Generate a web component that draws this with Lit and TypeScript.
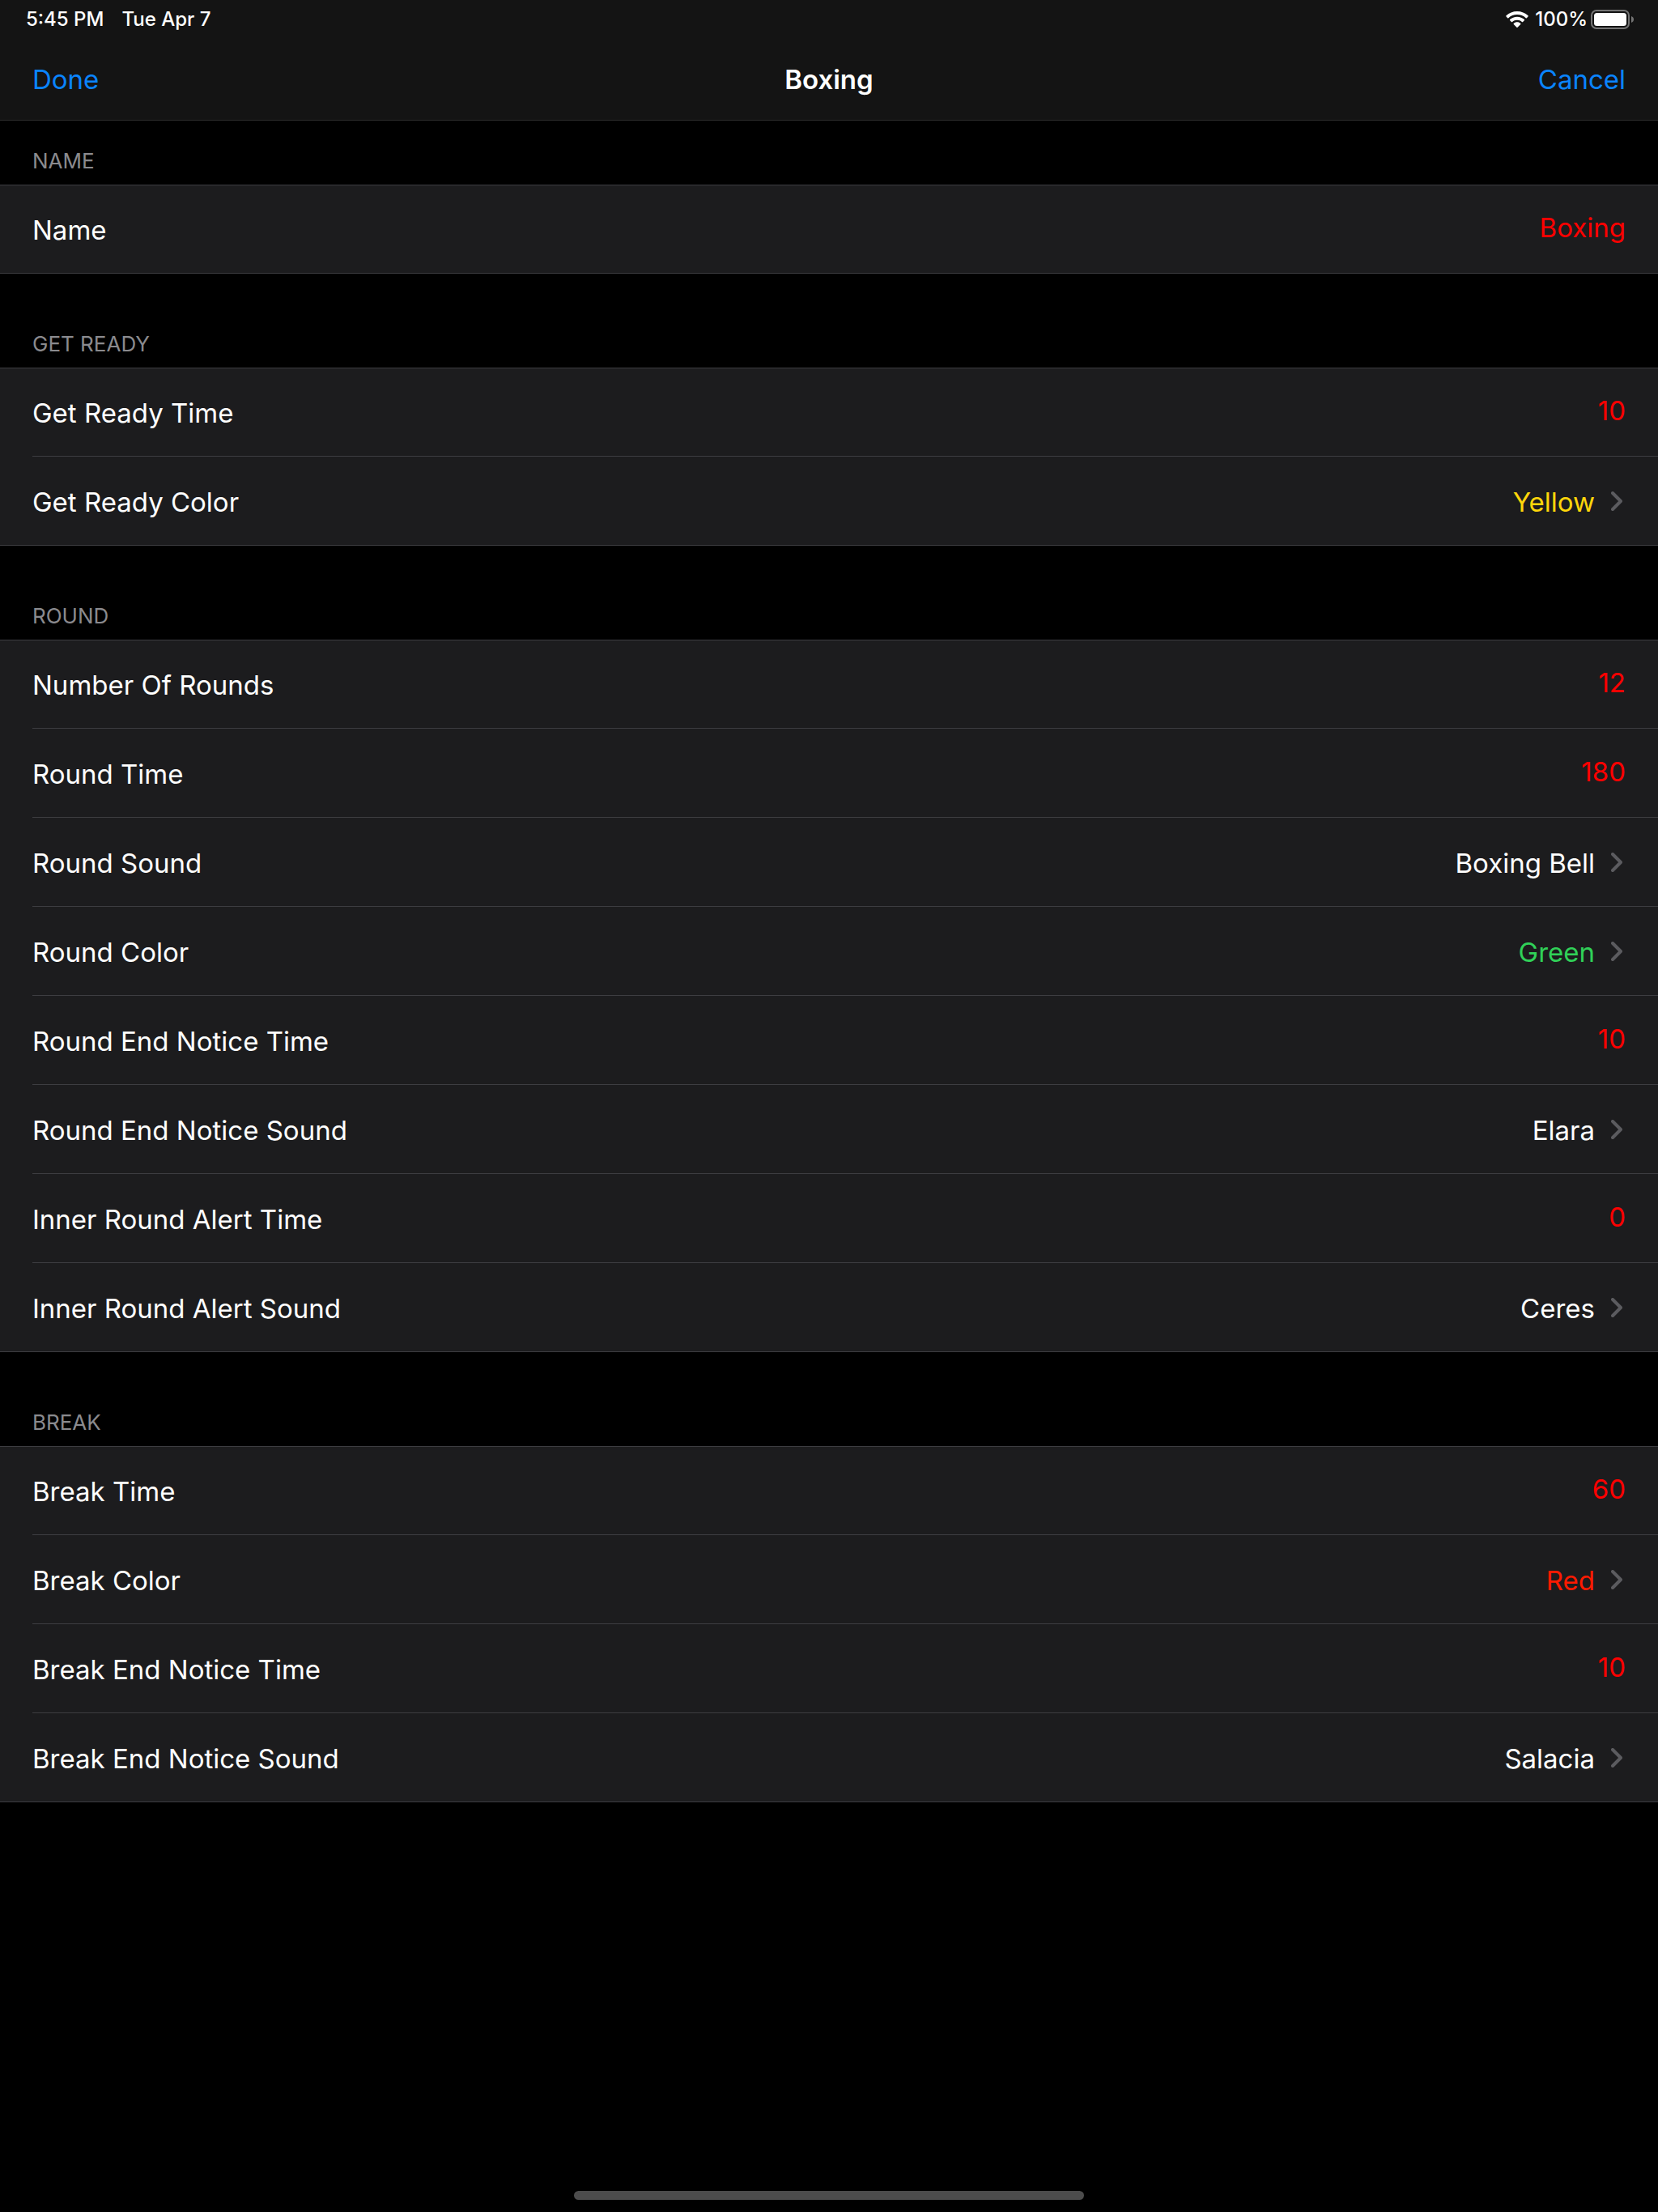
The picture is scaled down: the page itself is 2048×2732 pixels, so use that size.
import { LitElement, html, css, nothing } from "lit";
import { customElement, property } from "lit/decorators.js";
import { classMap } from "lit/directives/class-map.js";

type Tone = "plain" | "yellow" | "green" | "red";

interface Setting {
  id: string;
  label: string;
  value: string;
  kind: "text" | "number" | "choice";
  tone?: Tone;
}

interface Group {
  title: string;
  settings: Setting[];
}

const GROUPS: Group[] = [
  {
    title: "Name",
    settings: [{ id: "name", label: "Name", value: "Boxing", kind: "text" }],
  },
  {
    title: "Get Ready",
    settings: [
      { id: "ready-time", label: "Get Ready Time", value: "10", kind: "number" },
      { id: "ready-color", label: "Get Ready Color", value: "Yellow", kind: "choice", tone: "yellow" },
    ],
  },
  {
    title: "Round",
    settings: [
      { id: "rounds", label: "Number Of Rounds", value: "12", kind: "number" },
      { id: "round-time", label: "Round Time", value: "180", kind: "number" },
      { id: "round-sound", label: "Round Sound", value: "Boxing Bell", kind: "choice" },
      { id: "round-color", label: "Round Color", value: "Green", kind: "choice", tone: "green" },
      { id: "round-end-time", label: "Round End Notice Time", value: "10", kind: "number" },
      { id: "round-end-sound", label: "Round End Notice Sound", value: "Elara", kind: "choice" },
      { id: "inner-time", label: "Inner Round Alert Time", value: "0", kind: "number" },
      { id: "inner-sound", label: "Inner Round Alert Sound", value: "Ceres", kind: "choice" },
    ],
  },
  {
    title: "Break",
    settings: [
      { id: "break-time", label: "Break Time", value: "60", kind: "number" },
      { id: "break-color", label: "Break Color", value: "Red", kind: "choice", tone: "red" },
      { id: "break-end-time", label: "Break End Notice Time", value: "10", kind: "number" },
      { id: "break-end-sound", label: "Break End Notice Sound", value: "Salacia", kind: "choice" },
    ],
  },
];

@customElement("status-bar")
export class StatusBar extends LitElement {
  static styles = css`
    :host {
      display: flex;
      align-items: center;
      justify-content: space-between;
      height: 48px;
      padding: 0 29px 0 32px;
      box-sizing: border-box;
      font-size: 24px;
      line-height: 28px;
      font-weight: 500;
      color: #fff;
    }
    .side {
      display: flex;
      align-items: center;
    }
    .clock {
      gap: 22px;
    }
    .wifi {
      margin-right: 8px;
    }
    .battery {
      margin-left: 4px;
    }
    svg {
      display: block;
    }
  `;

  render() {
    return html`
      <div class="side clock"><span>5:45 PM</span><span>Tue Apr 7</span></div>
      <div class="side">
        <svg class="wifi" width="28" height="20" viewBox="0 0 28 20" fill="#fff" aria-hidden="true">
          <path d="M14 0C8.800 0 4 2 .5 5.300c-.35.350-.35.800 0 1.150l1.700 1.700c.3.300.75.300 1.100 0C6.200 5.500 9.900 4.100 14 4.100s7.800 1.400 10.700 4.050c.35.300.8.300 1.100 0l1.700-1.700c.35-.35.350-.8 0-1.150C24 2 19.200 0 14 0z"/>
          <path d="M14 6.700c-3.400 0-6.500 1.250-8.850 3.400-.35.350-.35.800 0 1.150l1.800 1.700c.3.300.75.300 1.100 0C9.650 11.500 11.700 10.700 14 10.700s4.350.8 5.950 2.250c.35.300.8.300 1.100 0l1.800-1.700c.35-.35.350-.8 0-1.150C20.500 7.950 17.400 6.700 14 6.700z"/>
          <path d="M14 13.300c-1.650 0-3.100.6-4.250 1.600-.35.350-.35.800 0 1.150l3.700 3.650c.3.300.8.300 1.100 0l3.700-3.650c.35-.35.350-.8 0-1.150-1.150-1-2.600-1.600-4.250-1.600z"/>
        </svg>
        <span>100%</span>
        <svg class="battery" width="54" height="24" viewBox="0 0 54 24" aria-hidden="true">
          <rect x="1" y="1" width="46" height="22" rx="6" fill="none" stroke="#747474" stroke-width="2"/>
          <rect x="4" y="4" width="40" height="16" rx="3.500" fill="#fff"/>
          <path d="M50 8c2 .7 3 2.200 3 4s-1 3.300-3 4z" fill="#747474"/>
        </svg>
      </div>
    `;
  }
}

@customElement("setting-row")
export class SettingRow extends LitElement {
  @property({ attribute: false }) setting!: Setting;

  static styles = css`
    :host {
      display: block;
    }
    .row {
      display: flex;
      align-items: center;
      justify-content: space-between;
      box-sizing: border-box;
      width: 100%;
      height: 110px;
      margin: 0;
      padding: 2px 40px 0;
      border: 0;
      background: none;
      font: inherit;
      color: #fff;
      text-align: left;
    }
    .label {
      flex: none;
    }
    .field {
      flex: 1;
      min-width: 0;
      height: 40px;
      box-sizing: content-box;
      margin: 0;
      padding: 0 0 6px;
      border: 0;
      outline: 0;
      background: none;
      font: inherit;
      text-align: right;
      color: #f00;
    }
    .value {
      display: flex;
      align-items: center;
      gap: 20px;
    }
    .chevron {
      display: block;
      margin-right: 4px;
    }
    .yellow {
      color: #ffd60a;
    }
    .green {
      color: #30d158;
    }
    .red {
      color: #ff1a00;
    }
  `;

  render() {
    const s = this.setting;
    if (s.kind !== "choice") {
      return html`
        <div class="row">
          <label class="label" for=${s.id}>${s.label}</label>
          <input
            class="field"
            id=${s.id}
            type="text"
            inputmode=${s.kind === "number" ? "numeric" : nothing}
            .value=${s.value}
          />
        </div>
      `;
    }
    const tone = s.tone ?? "plain";
    return html`
      <button class="row" type="button">
        <span class="label">${s.label}</span>
        <span class="value">
          <span class=${classMap({ [tone]: true })}>${s.value}</span>
          <svg class="chevron" width="14" height="26" viewBox="0 0 14 26" fill="none" stroke="#5b5b5f"
            stroke-width="4" stroke-linecap="round" stroke-linejoin="round" aria-hidden="true">
            <path d="M2 2L12 12L2 22"/>
          </svg>
        </span>
      </button>
    `;
  }
}

@customElement("app-root")
export class AppRoot extends LitElement {
  static styles = css`
    :host {
      display: flex;
      flex-direction: column;
      min-height: 100vh;
      background: #000;
      color: #fff;
      font-family: Inter, "Liberation Sans", sans-serif;
      font-size: 33px;
      line-height: 40px;
    }
    .top {
      background: #141414;
      border-bottom: 1px solid #2b2b2b;
    }
    .nav {
      display: grid;
      grid-template-columns: 1fr auto 1fr;
      align-items: center;
      height: 100px;
      padding: 0 40px;
    }
    .title {
      margin: 0;
      font-size: 33px;
      font-weight: 600;
    }
    .action {
      justify-self: start;
      margin: 0;
      padding: 0;
      border: 0;
      background: none;
      font: inherit;
      color: #0a84ff;
    }
    .cancel {
      justify-self: end;
    }
    .group-title {
      display: flex;
      align-items: flex-end;
      box-sizing: border-box;
      height: 116px;
      margin: 0;
      padding: 0 40px 13px;
      font-size: 26px;
      line-height: 32px;
      font-weight: 400;
      text-transform: uppercase;
      color: #8a8a8e;
    }
    .group:first-child .group-title {
      height: 79px;
    }
    .rows {
      list-style: none;
      margin: 0;
      padding: 0;
      background: linear-gradient(#3d3d41, #3d3d41) top / 100% 1px no-repeat,
        linear-gradient(#3d3d41, #3d3d41) bottom / 100% 1px no-repeat, #1c1c1e;
    }
    .item:not(:last-child) {
      background: linear-gradient(#3d3d41, #3d3d41) 40px 100% / 100% 1px no-repeat;
    }
    .home {
      display: flex;
      justify-content: center;
      margin-top: auto;
      padding: 20px 0 15px;
    }
    .indicator {
      width: 31%;
      max-width: 630px;
      height: 11px;
      border-radius: 6px;
      background: #4c4c4c;
    }
  `;

  render() {
    return html`
      <header class="top">
        <status-bar></status-bar>
        <nav class="nav">
          <button class="action" type="button">Done</button>
          <h1 class="title">Boxing</h1>
          <button class="action cancel" type="button">Cancel</button>
        </nav>
      </header>
      <main>
        ${GROUPS.map(
          (g) => html`
            <section class="group">
              <h2 class="group-title">${g.title}</h2>
              <ul class="rows">
                ${g.settings.map(
                  (s) => html`<li class="item"><setting-row .setting=${s}></setting-row></li>`
                )}
              </ul>
            </section>
          `
        )}
      </main>
      <footer class="home"><div class="indicator"></div></footer>
    `;
  }
}
